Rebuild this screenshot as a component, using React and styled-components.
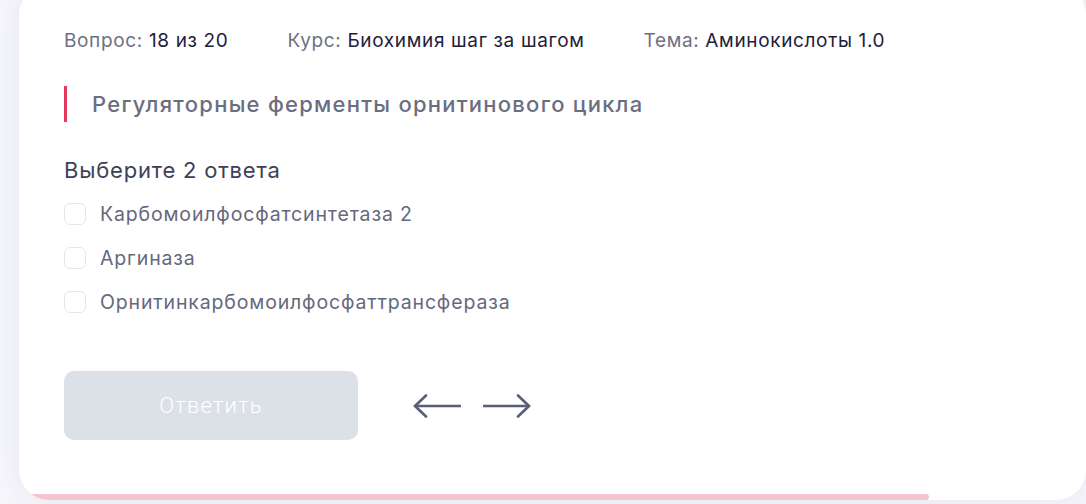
import React, { useState } from 'react';
import styled, { createGlobalStyle } from 'styled-components';

const GlobalStyle = createGlobalStyle`
  html, body {
    margin: 0;
    padding: 0;
    background: #f6f6fb;
    overflow: hidden;
  }
  body {
    font-family: Inter, "Noto Sans", "Liberation Sans", sans-serif;
  }
`;

const Page = styled.div`
  height: 504px;
  overflow: hidden;
  display: flex;
  flex-direction: column;
  padding-left: 19px;
`;

const Card = styled.div`
  position: relative;
  flex-shrink: 0;
  margin-top: -15px;
  height: 515px;
  box-sizing: border-box;
  background: #fff;
  border-radius: 30px;
  overflow: hidden;
  padding: 44px 0 0 45px;
  box-shadow: 0 0 28px rgba(210, 212, 235, 0.45);
  display: flex;
  flex-direction: column;
`;

const Meta = styled.div`
  display: flex;
  gap: 59px;
  font-size: 19px;
  line-height: 24px;
  letter-spacing: 0.65px;
`;

const MetaItem = styled.span`
  color: #6d7083;
  white-space: nowrap;
`;

const MetaValue = styled.span`
  color: #1e2139;
`;

const Title = styled.h2`
  margin: 33px 0 0;
  border-left: 3px solid #e1385f;
  padding-left: 25px;
  font-size: 22px;
  font-weight: 500;
  line-height: 36px;
  color: #6b6e80;
  letter-spacing: 1.25px;
`;

const Hint = styled.div`
  margin-top: 34px;
  font-size: 22px;
  line-height: 28px;
  color: #3d4058;
  letter-spacing: 0.8px;
`;

const Options = styled.div`
  margin-top: 19px;
  display: flex;
  flex-direction: column;
  gap: 22px;
`;

const Option = styled.label`
  display: flex;
  align-items: center;
  gap: 14px;
  height: 22px;
  font-size: 19.5px;
  color: #65687c;
  cursor: pointer;
  letter-spacing: 0.85px;
`;

const Box = styled.span`
  width: 22px;
  height: 22px;
  box-sizing: border-box;
  border: 1.5px solid ${p => (p.$checked ? '#e1385f' : '#e6e7eb')};
  background: ${p => (p.$checked ? '#e1385f' : '#fff')};
  border-radius: 6px;
  flex-shrink: 0;
`;

const Actions = styled.div`
  margin-top: 58px;
  display: flex;
  align-items: center;
  gap: 55px;
`;

const SubmitButton = styled.button`
  width: 294px;
  height: 69px;
  border: none;
  border-radius: 10px;
  background: #dce0e7;
  color: #fff;
  font-family: Roboto, Inter, sans-serif;
  font-size: 22px;
  font-weight: 300;
  letter-spacing: 1.2px;
`;

const Arrows = styled.div`
  display: flex;
  gap: 22px;
`;

const ArrowButton = styled.button`
  border: none;
  background: none;
  padding: 0;
  width: 48px;
  height: 24px;
  display: flex;
  cursor: pointer;
`;

const Progress = styled.div`
  position: absolute;
  left: 0;
  bottom: 0;
  height: 6px;
  background: #f5c5cd;
  border-radius: 0 6px 6px 0;
`;

const Arrow = ({ dir }) => (
  <svg width="48" height="24" viewBox="0 0 48 24" fill="none" stroke="#5a5e76" strokeWidth="2.6" strokeLinecap="round" strokeLinejoin="round">
    {dir === 'left' ? (
      <>
        <path d="M2 12 H47" />
        <path d="M13 1.5 L2 12 L13 22.5" />
      </>
    ) : (
      <>
        <path d="M1 12 H46" />
        <path d="M35 1.5 L46 12 L35 22.5" />
      </>
    )}
  </svg>
);

const answers = [
  'Карбомоилфосфатсинтетаза 2',
  'Аргиназа',
  'Орнитинкарбомоилфосфаттрансфераза',
];

export default function App() {
  const [checked, setChecked] = useState([]);
  const toggle = i =>
    setChecked(c => (c.includes(i) ? c.filter(x => x !== i) : [...c, i]));

  return (
    <Page>
      <GlobalStyle />
      <Card>
        <Meta>
          <MetaItem>Вопрос: <MetaValue>18 из 20</MetaValue></MetaItem>
          <MetaItem>Курс: <MetaValue>Биохимия шаг за шагом</MetaValue></MetaItem>
          <MetaItem>Тема: <MetaValue>Аминокислоты 1.0</MetaValue></MetaItem>
        </Meta>
        <Title>Регуляторные ферменты орнитинового цикла</Title>
        <Hint>Выберите 2 ответа</Hint>
        <Options>
          {answers.map((a, i) => (
            <Option key={a} onClick={() => toggle(i)}>
              <Box $checked={checked.includes(i)} />
              {a}
            </Option>
          ))}
        </Options>
        <Actions>
          <SubmitButton disabled={checked.length < 2}>Ответить</SubmitButton>
          <Arrows>
            <ArrowButton><Arrow dir="left" /></ArrowButton>
            <ArrowButton><Arrow dir="right" /></ArrowButton>
          </Arrows>
        </Actions>
        <Progress style={{ width: `${(910 / 1067) * 100}%` }} />
      </Card>
    </Page>
  );
}
